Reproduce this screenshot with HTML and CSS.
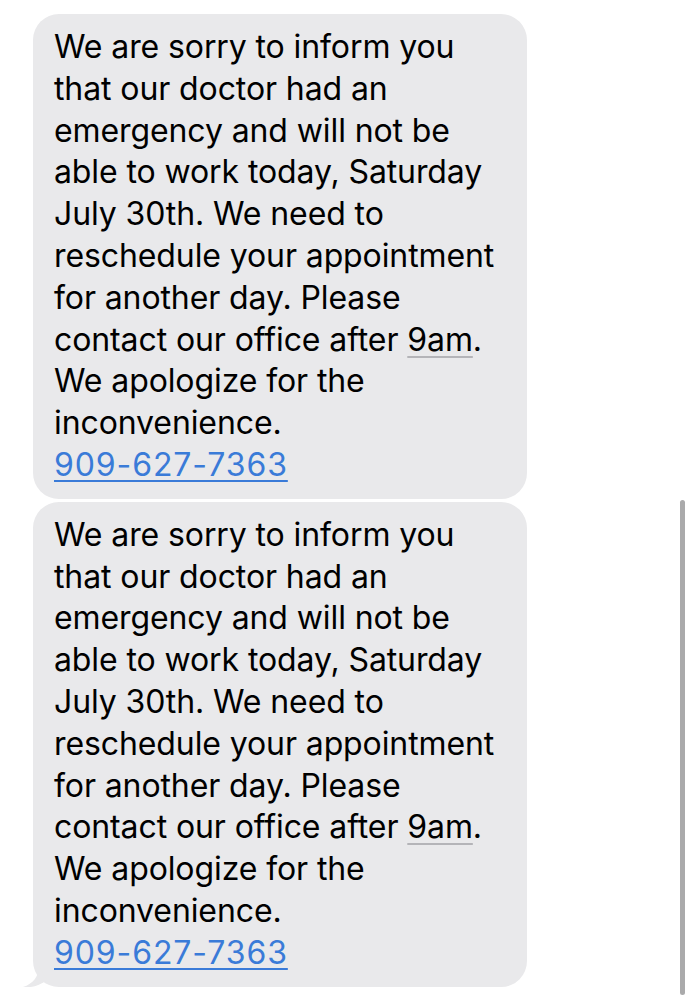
FILE: index.html
```html
<!DOCTYPE html>
<html>

<head>
  <meta charset="utf-8" />
  <title>Messages</title>
  <meta name="viewport" content="width=device-width, initial-scale=1">
  <link rel="stylesheet" href="styles.css">
</head>

<body>
  <div class="thread">
    <div class="bubble">
      <p>We are sorry to inform you<br>
        that our doctor had an<br>
        emergency and will not be<br>
        able to work today, Saturday<br>
        July 30th. We need to<br>
        reschedule your appointment<br>
        for another day. Please<br>
        contact our office after <span class="detect">9am</span>.<br>
        We apologize for the<br>
        inconvenience.<br>
        <a href="#">909-627-7363</a></p>
    </div>
    <div class="bubble last">
      <p>We are sorry to inform you<br>
        that our doctor had an<br>
        emergency and will not be<br>
        able to work today, Saturday<br>
        July 30th. We need to<br>
        reschedule your appointment<br>
        for another day. Please<br>
        contact our office after <span class="detect">9am</span>.<br>
        We apologize for the<br>
        inconvenience.<br>
        <a href="#">909-627-7363</a></p>
      <svg class="tail" width="24" height="22" viewBox="0 0 24 22">
        <path d="M16 0 C16 10 10 18 0 21 C8 22 16 20 24 14 Z" fill="#e9e9eb" />
      </svg>
    </div>
  </div>
  <div class="scrollbar"></div>
</body>

</html>
```

FILE: styles.css
```css
* {
  margin: 0;
  padding: 0;
  box-sizing: border-box;
}

body {
  background: #fff;
  font: 32px/41.8px 'Inter', 'Liberation Sans', sans-serif;
  letter-spacing: -0.1px;
  color: #000;
}

a {
  color: #3a7bd8;
  letter-spacing: 0.9px;
  text-decoration: underline;
  text-decoration-thickness: 2px;
  text-underline-offset: 4px;
}

.thread {
  display: flex;
  flex-direction: column;
  gap: 3px;
  padding: 14px 0 0 33px;
}

.bubble {
  position: relative;
  width: 494px;
  padding: 12px 20px 13px 21px;
  border-radius: 26px;
  background: #e9e9eb;
}

.bubble p {
  white-space: nowrap;
}

.detect {
  text-decoration: underline;
  text-decoration-color: #b4b4b8;
  text-decoration-thickness: 2px;
  text-underline-offset: 5px;
}

.tail {
  position: absolute;
  left: -10px;
  bottom: -1px;
}

.scrollbar {
  position: absolute;
  left: 680px;
  top: 500px;
  width: 5px;
  height: 495px;
  border-radius: 3px;
  background: #aaaaab;
}
```
